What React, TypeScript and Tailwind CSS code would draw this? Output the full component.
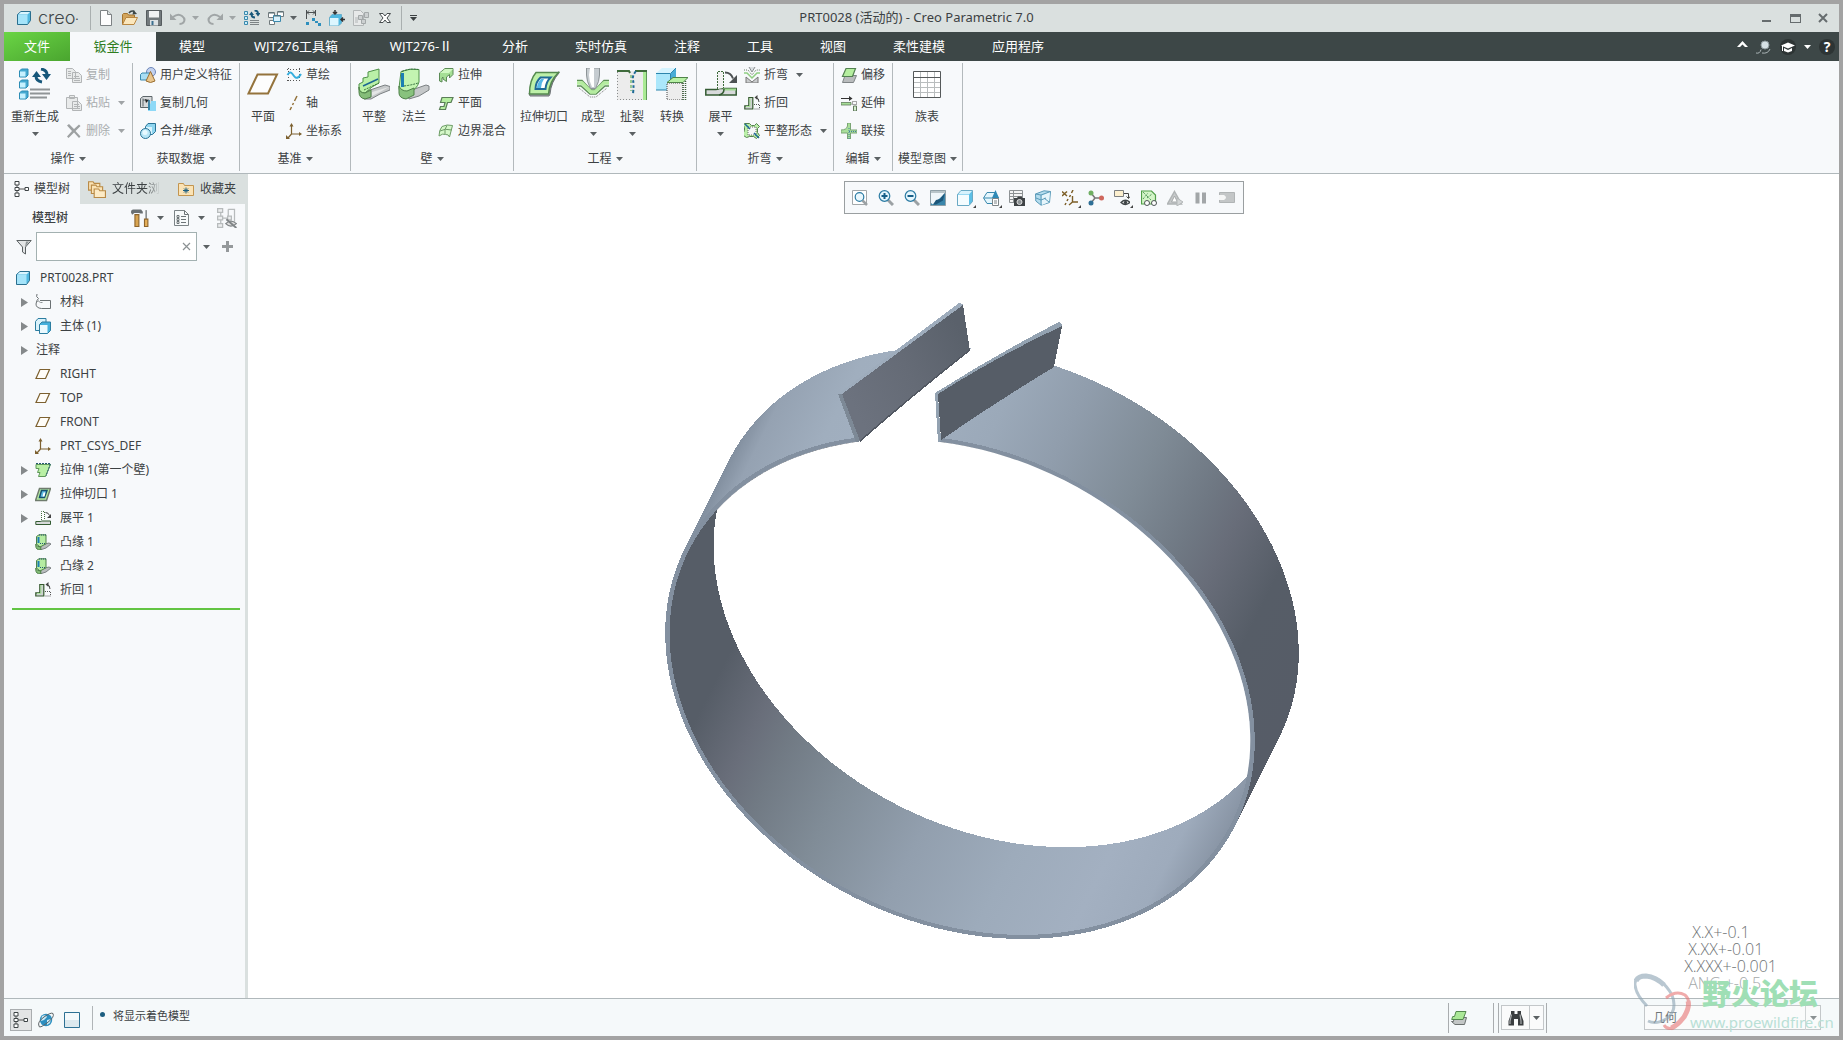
import type { ReactNode } from "react";

const glyphs: Record<string, ReactNode> = {
  cube: (
    <>
      <path d="M1.5 4.5 5 1.5h9.5v9l-3 4h-10z" fill="#4fb8e0" stroke="#2a6f8f" />
      <path d="M2 5h9.5v9H2z" fill="#a5e4fa" />
      <path d="M2 4.5 5 2h9l-2.5 2.5z" fill="#d9f5ff" />
    </>
  ),
  newFile: (
    <>
      <path d="M2.5.5h7l4 4v11h-11z" fill="#fdfdfd" stroke="#7d8284" />
      <path d="M9.5.5v4h4" fill="#d9dede" stroke="#7d8284" />
    </>
  ),
  open: (
    <>
      <path d="M.5 14.5v-10l1-1h4l1 1.5h6v3" fill="#d3a55c" stroke="#a5742e" />
      <path d="M.5 14.5 4 7.5h11.5l-3.5 7z" fill="#fbe7bd" stroke="#b98742" />
      <path d="M7 3q2-3 5.5-1.5" fill="none" stroke="#3d4747" strokeWidth="1.5" />
      <path d="M11.5 0 15 4l-4.500.5z" fill="#3d4747" />
    </>
  ),
  save: (
    <>
      <path d="M.5.5h15v15H.5z" fill="#737a7d" stroke="#565c5f" />
      <path d="M3 1h10v6.5H3z" fill="#f0f2f3" />
      <path d="M4 10h8v5.5H4z" fill="#dce1e4" />
      <path d="M5.5 11h2v4h-2z" fill="#3b6f8f" />
    </>
  ),
  undo: (
    <>
      <path d="M3 7q5-4 9-1t1.5 6.5q-1.5 1.5-4 1.5" fill="none" stroke="#a0a5a6" strokeWidth="2" />
      <path d="M0 3.500V10h6.5z" fill="#a0a5a6" />
    </>
  ),
  redo: (
    <>
      <path d="M13 7Q8 3 4 6t-1.5 6.5Q4 14 6.5 14" fill="none" stroke="#a0a5a6" strokeWidth="2" />
      <path d="M16 3.500V10H9.5z" fill="#a0a5a6" />
    </>
  ),
  regenSmall: (
    <>
      <path d="M.5 1.5h3v3h-3zM.5 6.5h3v3h-3zM.5 11.5h3v3h-3z" fill="#c9eefb" stroke="#3a89ad" />
      <path d="M6 10.5h9M6 12.5h9M6 14.5h9" stroke="#7c8385" />
      <path d="M7.500 4.5q0 3 3.5 3M14 3.5q0-3-3.5-3" fill="none" stroke="#17577a" strokeWidth="1.8" />
      <path d="M5 5l2.500-3.5L10 5zM11.500 3h5L14 6.5z" fill="#17577a" />
    </>
  ),
  windows: (
    <>
      <path d="M.5 2.5h6v5h-6zM9.5 1.5h6v5h-6zM1.5 10.5h5v4h-5z" fill="#fff" stroke="#717a7d" />
      <path d="M5.5 5.5h7v6h-7z" fill="#d8f2fd" stroke="#3a89ad" />
      <path d="M1 3h5M10 2h5M6 6h6" stroke="#4f686f" />
    </>
  ),
  dimension: (
    <>
      <path d="M1.500 0v9M10.500 0v6M2 2.500h8M4 .5l-2 2 2 2M8 .5l2 2-2 2" fill="none" stroke="#4b4f50" />
      <path d="M1 12h3v3H1zM7 8h3v3H7zM10 11h3v2h-3zM13 13h3v3h-3z" fill="#2e8fbd" />
    </>
  ),
  moveBox: (
    <>
      <path d="M.5 7.500 3 4.5h9.500v8.500l-2.500 2.500H.5z" fill="#4fb8e0" stroke="#67aecb" />
      <path d="M1 8h8.500v7.500H1z" fill="#dcf6ff" />
      <path d="M6 0v4M4 2l2 2 2-2M16 9.500h-4M14 7.500l-2 2 2 2" fill="none" stroke="#333" strokeWidth="1.5" />
    </>
  ),
  modelGray: (
    <>
      <path d="M.5.5h7l3 3v12H.5z" fill="#e7e9e9" stroke="#b2b6b7" />
      <path d="M2 8h3M2 10h3M2 12h3" stroke="#b2b6b7" />
      <path d="M5.5 5.5h4v4h-4zM11.5 2.5h4v5h-4zM8.5 9.5h4v4h-4z" fill="#ccd0d1" stroke="#a3a8a9" />
    </>
  ),
  closeX: (
    <path d="M2.500 3.500h3.500L8 6l2-2.500h3.500L10 8l3.500 4.500H10L8 10l-2 2.500H2.500L6 8z" fill="#fff" stroke="#474d4f" />
  ),
  regen: (
    <>
      {[1, 12, 23].map((y) => (
        <g key={y}>
          <path d={`M.5 ${y + 2} 2.5 ${y}h6.5v6l-2 2H.5z`} fill="#45a9d1" stroke="#2c8db5" />
          <path d={`M1 ${y + 2.5}h5.5v5H1z`} fill="#c6f1ff" />
        </g>
      ))}
      <path d="M11 21.5h20M11 25.500h20M11 29.500h17" stroke="#8f9496" strokeWidth="1.800" />
      <path d="M17 8q0 5 6 6M28 7q0-5-6-6" fill="none" stroke="#17577a" strokeWidth="3" />
      <path d="M13 9l4.500-6L22 9zM23 6h9l-4.500 6z" fill="#17577a" />
    </>
  ),
  copy: <path d="M.5 1.5h6l3 3v7h-9zM6.5 5.5h6l3 3v7h-9zM8 9.5h5M8 11.5h6M8 13.5h6M2 4.5h3M2 6.5h3M2 8.5h3" fill="#e9ebeb" stroke="#b2b5b6" />,
  paste: <path d="M.5 2.5h11v11H.5zM3.500.5h5v3h-5zM6.5 6.5h6l3 3v6h-9zM8 9.5h5M8 11.5h6M8 13.5h6" fill="#e9ebeb" stroke="#b2b5b6" />,
  remove: <path d="M1 2.5 3 1l5 5 5-4.5L14.5 3l-5 5 5 5.5-1.5 1.5-5-5.5L2.5 15 1 13.5 6 8z" fill="#9da1a2" />,
  userFeature: (
    <>
      <circle cx="11" cy="5" r="4.5" fill="#c3d2ef" stroke="#6d86b8" />
      <path d="M.5 7.5 2 6h8v5l-2 2H.5z" fill="#a9def4" stroke="#3a89ad" />
      <path d="M10.5 4.5 15 14q-4.5 3-9 0z" fill="#e9c68e" stroke="#9a6f32" />
    </>
  ),
  copyGeom: (
    <>
      <path d="M.5 3.5 3 1.5h9v8l-3 3H.5z" fill="#d7dadc" stroke="#5d666a" />
      <path d="M3 3.5v8M3 5h6" stroke="#5d666a" />
      <path d="M5 4l3.5 1.5L6 8z" fill="#222" />
      <path d="M8 8.5h3V6h5v10H8z" fill="#8ed9f7" />
      <path d="M9 5v10" stroke="#1d6b92" strokeWidth="1.5" />
    </>
  ),
  merge: (
    <>
      <path d="M5.5 3.5 8 .5h7.5v8l-3 3h-7z" fill="#8fd5ef" stroke="#2a7396" />
      <path d="M6 4h6v7H6z" fill="#d8f3fd" />
      <circle cx="5.5" cy="10.5" r="5" fill="#b8e6f7" stroke="#2a7396" />
      <circle cx="5" cy="9.5" r="2.5" fill="#e7f9ff" />
    </>
  ),
  plane32: <path d="M10.500 6.500h19.500l-9 19H1.500z" fill="#fdfdfd" stroke="#94733c" strokeWidth="2" />,
  sketch: (
    <>
      <path d="M1 2.5h14M1 13.5h14M2.5 1v14M13.5 1v14" stroke="#555" strokeDasharray="1 2" />
      <path d="M1.5 8Q4 3.5 6.5 7t3 3.500Q12 12 15 7" fill="none" stroke="#36aede" strokeWidth="2" />
    </>
  ),
  axis: <path d="M11 1 8.5 6M7.5 8l-1 2M5.5 12 4 15" stroke="#94733c" strokeWidth="1.5" />,
  csys: (
    <>
      <path d="M5.5 2v9h9M5.5 11 2 15" fill="none" stroke="#7d6130" strokeWidth="1.2" />
      <path d="M3.500 3.5 5.500 0l2 3.500zM13 9l3 2-3 2zM0 12v4h4z" fill="#7d6130" />
    </>
  ),
  flat32: (
    <>
      <path d="M6 24 27 17l5 1.500v3.500L22 26l-9 5H6z" fill="#c5c8c9" stroke="#7c8183" />
      <path d="M14 24 31 19l-9 5-8 4z" fill="#e4e6e6" />
      <path d="M5 14V10l5-1V4l11-3v14l-7 4-7 6q-6 0-6-5v-4z" fill="#baf0a7" stroke="#4e9149" />
      <path d="M1 19q0 6 6 6l6-3v7l-6 2q-6-1-6-7z" fill="#85bd79" stroke="#4e8148" />
      <path d="M5 18 20 11" stroke="#1c6693" strokeWidth="1.5" />
      <path d="M6 22 21 15" stroke="#3d7a3b" strokeDasharray="2 1" />
    </>
  ),
  flange32: (
    <>
      <path d="M8 24 28 17l3 1v4L21 28 11 31z" fill="#c5c8c9" stroke="#7c8183" />
      <path d="M3 3.5Q12 0 21 1.500V14Q19 22 9 25q-8 1-8-5z" fill="#c3f4b1" stroke="#4e9149" />
      <path d="M1 18q2 5 8 5l7-3v7l-8 4q-7-1-7-6z" fill="#88c27d" stroke="#4e8148" />
      <path d="M4.5 5v14" stroke="#1c7fb3" strokeWidth="3" />
      <path d="M4 3.5Q12 0 20 1.500M6 18q8-1 14-3" fill="none" stroke="#2f6b3c" strokeDasharray="2 1" />
    </>
  ),
  extrude: (
    <>
      <path d="M1.5 6 7 1.5h8v6L11.5 11V7.500l-3 2.500v4.500L5 12v-2l-1 1v4l-2.500-1z" fill="#a5df95" stroke="#5c8b56" />
      <path d="M2 6 7 2h8l-4 4z" fill="#d0f8c2" />
    </>
  ),
  planar: <path d="M4 2.5h11l-2 5H9.5l-2 7H1.5l1-3H6l1-4H2.5z" fill="#b5ee9f" stroke="#5b7f58" strokeWidth="1.2" />,
  blend: (
    <>
      <path d="M4 3.5Q9 1 14.5 2.5L11.5 14q-1-3-4-2.500Q5 10 1 13q0-6 3-9.500z" fill="#d5f7c8" stroke="#6e9d67" />
      <path d="M9 2.5Q6 6 7 11M2 8q5-3 11.5-1" fill="none" stroke="#6e9d67" />
    </>
  ),
  cut32: (
    <>
      <path d="M2 28h19l1-2Q23 14 31 5v-1H30Q22 16 21 25H1z" fill="#999ea0" stroke="#6e7476" />
      <path d="M8 4.5h22.500Q21.500 13 20.500 26H1.500Q1.500 12 8 4.500z" fill="#bdf0a8" stroke="#54894f" strokeWidth="1.5" />
      <path d="M12.5 9.5h10Q18 14 17.500 21h-10q0-7 5-11.500z" fill="#fff" stroke="#1f6b96" strokeWidth="2" />
      <path d="M13 11h3q-3 4-3 9H9q0-5 4-9z" fill="#55b8e6" />
    </>
  ),
  form32: (
    <>
      <path d="M0 12.5h5l9 9.500h4l9-9.500h5M0 18h4l9 8h6l9-8h4" fill="none" stroke="#5c8f55" strokeWidth="1.5" />
      <path d="M0 15h5l9 9h4l9-9h5" fill="none" stroke="#b4ec9f" strokeWidth="3.5" />
      <path d="M2 20l11 9h6l11-9" fill="none" stroke="#777" strokeDasharray="1 1" />
      <path d="M9.5 0h13v7q0 6-4 13.500h-5Q9.500 13 9.500 7z" fill="#c6ccd0" stroke="#8d9497" />
      <path d="M13 0h4v19h-2q-3-6-3-12z" fill="#fff" />
    </>
  ),
  rip32: (
    <>
      <path d="M1 3h29v29H1z" fill="#ececec" />
      <path d="M1.500 4v27.500H29" fill="none" stroke="#8a8d8e" strokeDasharray="1 2" />
      <path d="M1 3h12l1 2M19 3h12" fill="none" stroke="#3f6b3c" strokeWidth="2" />
      <path d="M28.500 4v28" stroke="#a9ea94" strokeWidth="3" />
      <path d="M30.500 4v28" stroke="#5f9859" />
      <path d="M15 7v16" stroke="#9ac793" strokeWidth="2" strokeDasharray="3 2" />
      <path d="M20 3q-4 5-3 9t0 14" fill="none" stroke="#1f6b96" strokeWidth="2" strokeDasharray="3 2" />
    </>
  ),
  convert32: (
    <>
      <path d="M0 5h15v17H0z" fill="#abe7fb" />
      <path d="M0 5 6 0h14l-5 5z" fill="#d5f4ff" />
      <path d="M15 5l5-5v9l-5 6z" fill="#48acd6" />
      <path d="M0 5.5h14.500V22H0M15 5l5-5" fill="none" stroke="#2c85ad" />
      <path d="M11 15h16v17H11z" fill="#ededed" stroke="#444" strokeDasharray="1 1" />
      <path d="M11 14.5 17 9.5h15l-5 5z" fill="#b7f0a4" stroke="#4f8449" />
      <path d="M27 15v17M29.5 13v19" stroke="#3e5f3d" strokeWidth="1.5" strokeDasharray="1 1" />
    </>
  ),
  unbend32: (
    <>
      <path d="M.8 21.500h10.200q3 0 3.500-1h16.700v6.500H.8z" fill="#d8dadb" stroke="#345c33" strokeWidth="1.5" />
      <path d="M18 21.500h13" stroke="#9ed990" strokeWidth="2" />
      <path d="M14 27q5-1 5-6" fill="none" stroke="#345c33" strokeWidth="1.5" />
      <path d="M12.500 21V3.500h6V20" fill="#f2f2f2" stroke="#3f6b3c" strokeDasharray="2 1" />
      <path d="M20 4.500q6 0 8 6" fill="none" stroke="#4c5153" strokeWidth="2" />
      <path d="M32 7v8h-8z" fill="#4c5153" />
    </>
  ),
  bend: (
    <>
      <path d="M0 3h4l4 5 4-5h4" fill="none" stroke="#6b7b69" strokeDasharray="1 1" />
      <path d="M0 6h3l5 5 5-5h3" fill="none" stroke="#8fce82" strokeWidth="1.5" />
      <path d="M2 16v-6l6 5 6-5v6z" fill="#c9cccd" stroke="#777" />
      <path d="M5 0l3 5 3-5" fill="#dbe0e2" stroke="#8a8f91" />
    </>
  ),
  bendBack: (
    <>
      <path d="M.8 10.800h4V2.500h4V14H.8z" fill="#cfd2d3" stroke="#35592f" strokeWidth="1.200" />
      <path d="M2 11.500h4V3" fill="none" stroke="#a9e49a" />
      <path d="M10 9.500h5.500v4.500H10" fill="none" stroke="#555" strokeDasharray="1 1" />
      <path d="M15 7q0-4-3-4.500" fill="none" stroke="#444" />
      <path d="M10.500 2.500 13.500 0v5z" fill="#444" />
    </>
  ),
  flatState: (
    <>
      <path d="M.5.500h5l2 2h3l2-2 3 3-2 2v4l2 3-3 3-3-2h-4l-3 1-3-2v-3l1-2v-3l-1-2z" fill="#baf0a8" stroke="#55814f" />
      <path d="M4 4h8v8H4z" fill="#f6f8f8" stroke="#666" strokeDasharray="1 1" />
      <path d="M1 1l5 5M15 15l-5-5" stroke="#1f6b96" strokeWidth="1.5" />
    </>
  ),
  offset: (
    <>
      <path d="M4 8.5h11.500l-3 7H1.500z" fill="#b9bcbd" stroke="#7f8486" />
      <path d="M5 1.5h9.500l-3 8H1.500z" fill="#b5ee9f" stroke="#528050" strokeWidth="1.2" />
    </>
  ),
  extend: (
    <>
      <path d="M0 3.5h9" stroke="#333" />
      <path d="M8 1l3.500 2.500L8 6z" fill="#333" />
      <path d="M0 7.500h10v2.500H0z" fill="#a5dd96" stroke="#607b5c" strokeWidth="0.800" />
      <path d="M11.500 6.500h4v3h-4z" fill="none" stroke="#555" strokeDasharray="1 1" />
      <path d="M12.500 11v5h3v-5z" fill="#d5eccf" stroke="#607b5c" />
    </>
  ),
  join: (
    <>
      <path d="M6.5 0h3v7h6.500v3H9.500v6h-3v-6H0V7q5.500 0 6.500-4z" fill="#a9df9a" stroke="#7aa574" />
      <path d="M8 5v11M8 8.5h8" stroke="#3f7f9d" strokeDasharray="1 1" />
    </>
  ),
  table32: (
    <>
      <path d="M2.500 3.500h27v26h-27z" fill="#fff" stroke="#55595a" />
      <path d="M9.500 4v25M16.500 4v25M23.500 4v25M3 14.500h26M3 19.500h26M3 24.500h26" stroke="#b9bdbe" />
      <path d="M3 9.500h26" stroke="#55595a" />
    </>
  ),
  treeIcon: (
    <>
      <path d="M3 3.500v9M4 8h7" stroke="#555" />
      <path d="M1 .5h4v3.500H1zM1 6.500h4v3H1zM1 12h4v3.500H1zM11 6.500h3.500v3H11z" fill="#fff" stroke="#3f4547" />
    </>
  ),
  folders: (
    <>
      <path d="M.5 1.500h4l1 1.500h5v6H.5z" fill="#fbe3b5" stroke="#b98a46" />
      <path d="M3 4.500h4l1 1.500h5v6H3z" fill="#fbe3b5" stroke="#b98a46" />
      <path d="M5.500 8h4l1 1.500h5v6h-10z" fill="#fdebc6" stroke="#b98a46" />
    </>
  ),
  favorite: (
    <>
      <path d="M.5 14.500v-12h5l1 2h9v10z" fill="#fbe3b5" stroke="#c3954f" />
      <path d="M8 6.500v6M5 9.500h6M6 7.500l4 4M10 7.500l-4 4" stroke="#1c5e80" />
    </>
  ),
  hammer: (
    <>
      <path d="M0 3q0-2.500 2-2.500h7l1.500 2v1.500h-2L7 3.500H3L1 5z" fill="#6a7073" />
      <path d="M3.500 5h3.500v10.500H3.500z" fill="#d9a551" stroke="#8e652c" />
      <path d="M13.500 1v8" stroke="#8b9092" strokeWidth="1.500" />
      <path d="M12 9h3v6.500h-3z" fill="#e6b05a" stroke="#8e652c" />
    </>
  ),
  listPage: (
    <>
      <path d="M.5.500h10l4 4v11H.5z" fill="#f7fafb" stroke="#7b8386" />
      <path d="M10.500.5v4h4M7 6.500h5M7 9.500h5M7 12.500h5" fill="none" stroke="#6c7477" />
      <path d="M3 5.500h2v2H3zM3 8.500h2v2H3zM3 11.500h2v2H3z" fill="#fff" stroke="#6c7477" />
    </>
  ),
  treeHidden: (
    <>
      <path d="M3 3v10M3 8h6M9 1h5v10M9 1v7" fill="none" stroke="#b7bbbc" />
      <path d="M.5.500h4v3h-4zM.5 6.500h4v3h-4zM.5 12.500h4v3h-4zM8.500 6.500h3v3h-3z" fill="#eceeef" stroke="#b7bbbc" />
      <path d="M7 12.500q4-4 8.500 0-4.500 4-8.500 0z" fill="#ddd" stroke="#7f8486" />
      <path d="M7.500 9l8 7" stroke="#7f8486" strokeWidth="1.5" />
    </>
  ),
  funnel: (
    <>
      <path d="M.8 1.500h14.400L9.500 8v7l-3-2V8z" fill="#e3e5e6" stroke="#5b6163" />
      <path d="M9 8l4-5.500h-3z" fill="#8f9597" />
    </>
  ),
  material: (
    <>
      <path d="M5 6.500h10.500v8h-9Q1 14 1 10q.5-4 2.500-5.500Q.5 3 2 0" fill="none" stroke="#6b7173" />
      <path d="M2 8q1-2.500 2-.5l1.500 1h2" fill="none" stroke="#8e9496" />
    </>
  ),
  bodies: (
    <>
      <path d="M.5 3.5 3 .5h8v9l-3 3H.5z" fill="#d9f2fb" stroke="#2c7da0" />
      <path d="M4.5 6.5 7 4h8.500v8.500l-3 3h-8z" fill="#45b0dc" stroke="#2c7da0" />
      <path d="M5 7h7.500v8H5z" fill="#ebf9fe" />
    </>
  ),
  planeSmall: <path d="M5 3.500h9.500l-4 9H1z" fill="#fffdf8" stroke="#7d6130" strokeWidth="1.200" />,
  firstWall: (
    <>
      <path d="M1 2.500h14.500l-5 12H3.500l1.500-4H2.500l1.500-4H1z" fill="#b9f0a5" stroke="#5f9859" />
      <path d="M1 1.500h14.500L11 14" fill="none" stroke="#255a70" strokeDasharray="2 1" />
    </>
  ),
  cut: (
    <>
      <path d="M4.500 2.500h11l-4 12H.5z" fill="#b4eaa0" stroke="#6f7c6d" strokeWidth="1.5" />
      <path d="M6.500 4.500h5.500l-2.500 7h-5z" fill="#5bbbe4" stroke="#174f70" strokeWidth="1.5" />
      <path d="M8.500 6.500h2l-1 4h-2z" fill="#fff" />
    </>
  ),
  unbend: (
    <>
      <path d="M.8 11.500h5l1-.5h8.700v3.500H.8z" fill="#d8dadb" stroke="#345c33" />
      <path d="M6.500 10V1.500h3v8" fill="#fff" stroke="#3f6b3c" strokeDasharray="1 1" />
      <path d="M10.500 2.500q3 0 4 3" fill="none" stroke="#444" />
      <path d="M16 4v4h-4z" fill="#444" />
    </>
  ),
  flange: (
    <>
      <path d="M6 11l8-2 2 1-5 4-6 2z" fill="#b9bdbe" stroke="#7c8183" />
      <path d="M1.500 2.500 4 .8h7v9L5 13l-3.500-3z" fill="#b5eca2" stroke="#4e8148" />
      <path d="M.8 10q1 3 5 3v3q-5 0-5-4z" fill="#84bd79" stroke="#4e8148" />
      <path d="M3.500 3v6" stroke="#1c7fb3" strokeWidth="2" />
      <path d="M4 1h7M5 9.500h6" stroke="#255a70" strokeDasharray="1 1" />
    </>
  ),
  refit: (
    <>
      <path d="M.5.500h14v14H.5z" fill="#fff" stroke="#a3a8aa" />
      <circle cx="7.500" cy="7" r="4.300" fill="#e9f7fd" stroke="#2b7ba3" strokeWidth="1.200" />
      <path d="M10.500 10.500 15 15" stroke="#9ba1a4" strokeWidth="2.5" />
    </>
  ),
  zoomIn: (
    <>
      <path d="M9.500 9.500 15 15" stroke="#9ba1a4" strokeWidth="3" />
      <circle cx="6.500" cy="6" r="5.300" fill="#e5f6fd" stroke="#2b7ba3" strokeWidth="1.200" />
      <path d="M3.500 6h6M6.500 3v6" stroke="#165f88" strokeWidth="2" />
    </>
  ),
  zoomOut: (
    <>
      <path d="M9.500 9.500 15 15" stroke="#9ba1a4" strokeWidth="3" />
      <circle cx="6.500" cy="6" r="5.300" fill="#e5f6fd" stroke="#2b7ba3" strokeWidth="1.200" />
      <path d="M3.500 6h6" stroke="#165f88" strokeWidth="2" />
    </>
  ),
  repaint: (
    <>
      <path d="M.5.500h15v15H.5z" fill="#3a86ab" stroke="#8fa0a8" />
      <path d="M1 3h14.500L10 8 3 14.500 1 13z" fill="#eef6fa" />
      <path d="M3 14.500l3-4.500 4-1 5-6.500-2 8-7 4z" fill="#1b567a" />
      <path d="M1 2h14" stroke="#b8c5ca" strokeWidth="2" />
    </>
  ),
  shaded: (
    <>
      <path d="M.5 4.500 4 .5h11.500v11l-3.500 4H.5z" fill="#5cbfe6" stroke="#6aa9c4" />
      <path d="M1 5h11v10H1z" fill="#f4fcff" />
      <path d="M1 4.500 4 1h11l-3 3.500z" fill="#d6f2fd" />
    </>
  ),
  savedView: (
    <>
      <path d="M.5 8 4 2.500h8L15.500 8 12 13.500H4z" fill="#e4f6fd" stroke="#3a89ad" />
      <path d="M1 8h14" stroke="#3a89ad" />
      <path d="M12.500 0 16 8H9z" fill="#2f8ab6" />
      <path d="M9.500 8.500h6v7h-6zM11 11h3M11 13h3" fill="#fff" stroke="#7d8486" />
    </>
  ),
  viewManager: (
    <>
      <path d="M.5.500h13v12H.5zM1 3.500h12M1 6.500h12M1 9.500h12M4.500 1v11" fill="#f4f5f5" stroke="#8d9294" />
      <path d="M5 8h3l1-1.500h3.500l1 1.500H16v8H5z" fill="#3e4345" />
      <circle cx="10.500" cy="12" r="2.500" fill="#8c9294" stroke="#ddd" />
    </>
  ),
  perspective: (
    <>
      <path d="M.5 4 9 .8l6.500.7-1 11L6 15.200.8 11z" fill="#b5ddee" stroke="#5a9ab8" />
      <path d="M7 5.500 15 2l-1 10-7 3z" fill="#e6f5fb" />
      <path d="M.5 4l5.500 1L15.500 1.500M6 5v10M1 8l5 2M6 10l5-2M9 8l5 4" fill="none" stroke="#5a9ab8" />
    </>
  ),
  datums: (
    <>
      <path d="M0 1.500 5 6M5 1.500 0 6M11 0 9.500 3M8.500 5l-1 2M6 9l-1 2M4 13l-1 2" stroke="#7d5f28" strokeWidth="1.500" />
      <path d="M10.500 6v6H16M10.500 12 7 15" fill="none" stroke="#7d5f28" strokeWidth="1.400" />
    </>
  ),
  spin: (
    <>
      <path d="M3 3l4 5h7M7 8l-4 5" fill="none" stroke="#777" strokeWidth="1.500" />
      <circle cx="3" cy="3" r="2.500" fill="#6fae62" />
      <circle cx="13.500" cy="8" r="2.500" fill="#cf675d" />
      <circle cx="3" cy="13" r="2.500" fill="#2e6f96" />
    </>
  ),
  annotations: (
    <>
      <path d="M.5.500h9v6h-9z" fill="#fdf0cf" stroke="#7c7f80" />
      <path d="M10 3.500h4.500V8M12.500 6.500l2 2 1.500-2" fill="none" stroke="#444" />
      <path d="M7 12.500q4.500-4.500 9 0-4.500 4-9 0z" fill="#fff" stroke="#3f4547" strokeWidth="1.300" />
      <circle cx="11.500" cy="12.500" r="1.700" fill="#3f4547" />
    </>
  ),
  simulate: (
    <>
      <path d="M.5 1h10l4 4v9H.5z" fill="#d4f5c8" stroke="#519f49" strokeWidth="1.200" />
      <path d="M2 2l8 8M2 9l5-6M6 8l5-4" stroke="#2f7f3b" strokeDasharray="1 1" />
      <circle cx="6" cy="13" r="2.500" fill="#fff" stroke="#4f5557" />
      <circle cx="13" cy="13" r="2.500" fill="#fff" stroke="#4f5557" />
    </>
  ),
  warning: (
    <>
      <path d="M7.500 1.500 14.500 14H.5z" fill="#c6c9ca" stroke="#b0b4b5" strokeWidth="1.500" />
      <path d="M7.500 6 10.500 12h-6z" fill="#fff" stroke="#a4a8a9" />
      <path d="M10 8l6 4-6 4z" fill="#d3d6d7" stroke="#b3b7b8" />
    </>
  ),
  pause: <path d="M2.500 2.500h4v11h-4zM9 2.500h4v11H9z" fill="#a2a6a8" />,
  resultGray: (
    <>
      <path d="M.5 2.500h15v10H.5z" fill="#c3c6c7" stroke="#b0b4b5" />
      <path d="M0 5h5q4 2.500 0 5H0z" fill="#f5f6f6" />
    </>
  ),
  globe: (
    <>
      <circle cx="8" cy="8" r="6.200" fill="#2c8fc0" />
      <path d="M4 4q4-2 5 1l-3 3-3 1zM9 8l4-1-1 4-3 2z" fill="#c7eaf7" />
      <path d="M1 14Q-1 10 6 5T15 1.500Q17 5 9 11T1 14z" fill="none" stroke="#5e6568" />
    </>
  ),
  screen: (
    <>
      <path d="M.5.500h15v15H.5z" fill="#dce9ee" stroke="#2d7194" />
      <path d="M1 1h14v7H1z" fill="#f4f9fb" />
    </>
  ),
  sheet: (
    <>
      <path d="M3 7.500h12.500l-2 7H4l-3.500-3h2z" fill="#c3c7c6" stroke="#6b716f" />
      <path d="M5 1.500h10l-3 8H.7l1-3H3.500z" fill="#abe897" stroke="#54884e" />
    </>
  ),
  binoculars: (
    <>
      <path d="M3 1h3.500v3H9.500V1H13v3l2.500 7v4.500H10V9H6v6.500H.5V11L3 4z" fill="#3a3e40" />
      <path d="M3.500 4.500 2 11v3M12 4.500l1 6.500v3" fill="none" stroke="#a9adaf" strokeWidth="1.200" />
    </>
  ),
};

function Glyph({ name, big }: { name: string; big?: boolean }) {
  return (
    <svg
      viewBox={big ? "0 0 32 32" : "0 0 16 16"}
      className={big ? "h-8 w-8 shrink-0" : "h-4 w-4 shrink-0"}
      aria-hidden="true"
    >
      {glyphs[name]}
    </svg>
  );
}

function Caret({ className = "text-[#5b6163]" }: { className?: string }) {
  return (
    <svg viewBox="0 0 7 4" className={`h-1 w-[7px] shrink-0 ${className}`} aria-hidden="true">
      <path d="M0 0h7L3.5 4z" fill="currentColor" />
    </svg>
  );
}

function Small({ icon, label, menu, disabled }: { icon: string; label: string; menu?: boolean; disabled?: boolean }) {
  return (
    <button type="button" disabled={disabled} className="flex h-7 items-center gap-1 whitespace-nowrap disabled:text-[#a9adaf]">
      <Glyph name={icon} />
      {label}
      {menu && <Caret className={disabled ? "ml-1 text-[#a0a4a6]" : "ml-1 text-[#5b6163]"} />}
    </button>
  );
}

function Big({ icon, label, menu, width = "w-10" }: { icon: string; label: string; menu?: boolean; width?: string }) {
  return (
    <button type="button" className={`flex shrink-0 flex-col items-center pt-[7px] ${width}`}>
      <Glyph name={icon} big />
      <span className="mt-2 h-[18px] leading-[18px] whitespace-nowrap">{label}</span>
      {menu && <Caret className="mt-1.5 text-[#5b6163]" />}
    </button>
  );
}

function Group({ title, width, children }: { title: string; width: string; children: ReactNode }) {
  return (
    <section className={`flex shrink-0 ${width}`}>
      <div className="flex min-w-0 flex-1 flex-col">
        <div className="flex h-[84px]">{children}</div>
        <button type="button" className="flex h-7 items-center justify-center gap-1 whitespace-nowrap">
          {title}
          <Caret />
        </button>
      </div>
      <div className="my-0.5 w-px bg-[#b3b9bc]" />
    </section>
  );
}

function QuickButton({ icon, label, menu }: { icon: string; label: string; menu?: string }) {
  return (
    <button type="button" aria-label={label} className="flex items-center gap-1.5">
      <Glyph name={icon} />
      {menu && <Caret className={menu} />}
    </button>
  );
}

function TitleBar() {
  return (
    <header className="flex h-7 shrink-0 items-center bg-[#dae0df] text-[13px] text-[#3c4143]">
      <div className="flex flex-1 items-center">
        <div className="ml-3 flex w-[74px] items-center gap-1.5">
          <Glyph name="cube" />
          <span className="font-[Inter,sans-serif] text-lg leading-6 font-light text-[#40474a]">
            creo<sup className="text-[6px]">•</sup>
          </span>
        </div>
        <div className="flex h-6 items-center gap-2 border-x border-[#a9afaf] pr-2 pl-[7px]">
          <QuickButton icon="newFile" label="新建" />
          <QuickButton icon="open" label="打开" />
          <QuickButton icon="save" label="保存" />
          <QuickButton icon="undo" label="撤消" menu="text-[#a0a5a6]" />
          <QuickButton icon="redo" label="重做" menu="text-[#a0a5a6]" />
          <QuickButton icon="regenSmall" label="重新生成" />
          <QuickButton icon="windows" label="窗口" menu="text-[#5b6163]" />
          <QuickButton icon="dimension" label="尺寸" />
          <QuickButton icon="moveBox" label="移动" />
          <QuickButton icon="modelGray" label="模型" />
          <QuickButton icon="closeX" label="关闭窗口" />
        </div>
        <button type="button" aria-label="自定义快速访问工具栏" className="ml-2 flex flex-col items-center gap-px">
          <span className="h-px w-[7px] bg-[#3c4143]" />
          <Caret className="text-[#3c4143]" />
        </button>
      </div>
      <h1>PRT0028 (活动的) - Creo Parametric 7.0</h1>
      <div className="flex flex-1 items-center justify-end gap-4 pr-2.5">
        <button type="button" aria-label="最小化" className="flex h-3 w-3 items-end pb-0.5">
          <span className="h-0.5 w-[9px] bg-[#666c6e]" />
        </button>
        <button type="button" aria-label="最大化" className="h-[9px] w-[11px] border border-t-[3px] border-[#666c6e]" />
        <button type="button" aria-label="关闭" className="h-3 w-3">
          <svg viewBox="0 0 12 12"><path d="M2 2l8 8M10 2l-8 8" stroke="#666c6e" strokeWidth="2" /></svg>
        </button>
      </div>
    </header>
  );
}

const tabs = [
  { label: "模型" },
  { label: "WJT276工具箱", width: "w-[88px]" },
  { label: "WJT276-Ⅱ", width: "w-[68px]" },
  { label: "分析" },
  { label: "实时仿真" },
  { label: "注释" },
  { label: "工具" },
  { label: "视图" },
  { label: "柔性建模" },
  { label: "应用程序" },
];

function TabBar() {
  return (
    <nav className="flex h-[29px] shrink-0 items-stretch bg-[#3d4747] text-[13px] text-white">
      <button type="button" className="w-[66px] bg-linear-to-br from-[#6ad545] to-[#4aa52f]">文件</button>
      <button type="button" className="w-[86px] bg-[#f7f9fb] text-[#2f7d1f]">钣金件</button>
      <div className="flex flex-1 gap-[47px] pl-[23px]">
        {tabs.map((tab) => (
          <button type="button" key={tab.label} className={`whitespace-nowrap ${tab.width ?? ""}`}>{tab.label}</button>
        ))}
      </div>
      <div className="flex items-center gap-2 pr-1">
        <button type="button" aria-label="最小化功能区" className="pb-1.5">
          <svg viewBox="0 0 11 6" className="h-1.5 w-[11px]"><path d="M0 6 5.5 0 11 6H8L5.500 3.500 3 6z" fill="#fff" /></svg>
        </button>
        <button type="button" aria-label="搜索">
          <svg viewBox="0 0 16 16" className="h-4 w-4">
            <circle cx="9" cy="6" r="4" fill="#d5e0e4" stroke="#8d999c" />
            <path d="M0 14q4 1 5-3.500M6 14q6 1 8-4" fill="none" stroke="#aab4b6" />
          </svg>
        </button>
        <button type="button" aria-label="学习" className="flex items-center gap-2">
          <svg viewBox="0 0 16 16" className="h-4 w-4">
            <circle cx="8" cy="8" r="8" fill="#2d3434" />
            <path d="M1 6.500 8 3.500l7 3L8 9.500zM4 9l4 2 4-2v3l-4 1.500L4 12zM2 7h1v5H2z" fill="#fff" />
          </svg>
          <Caret className="text-white" />
        </button>
        <button type="button" aria-label="帮助" className="h-4 w-4 rounded-full bg-[#2d3434] text-sm leading-4 font-bold">?</button>
      </div>
    </nav>
  );
}

function Ribbon() {
  return (
    <div className="flex h-[113px] shrink-0 overflow-hidden border-b border-[#b0b8bb] bg-[#f7f9fb]">
      <Group title="操作" width="w-[129px]">
        <Big icon="regen" label="重新生成" menu width="w-[62px]" />
        <div>
          <Small icon="copy" label="复制" disabled />
          <Small icon="paste" label="粘贴" menu disabled />
          <Small icon="remove" label="删除" menu disabled />
        </div>
      </Group>
      <Group title="获取数据" width="w-[107px]">
        <div className="pl-[7px]">
          <Small icon="userFeature" label="用户定义特征" />
          <Small icon="copyGeom" label="复制几何" />
          <Small icon="merge" label="合并/继承" />
        </div>
      </Group>
      <Group title="基准" width="w-[111px]">
        <Big icon="plane32" label="平面" width="w-[46px]" />
        <div>
          <Small icon="sketch" label="草绘" />
          <Small icon="axis" label="轴" />
          <Small icon="csys" label="坐标系" />
        </div>
      </Group>
      <Group title="壁" width="w-[163px]">
        <Big icon="flat32" label="平整" width="w-[46px]" />
        <Big icon="flange32" label="法兰" width="w-[34px]" />
        <div className="pl-[7px]">
          <Small icon="extrude" label="拉伸" />
          <Small icon="planar" label="平面" />
          <Small icon="blend" label="边界混合" />
        </div>
      </Group>
      <Group title="工程" width="w-[183px]">
        <Big icon="cut32" label="拉伸切口" width="w-[60px]" />
        <Big icon="form32" label="成型" menu width="w-[38px]" />
        <Big icon="rip32" label="扯裂" menu />
        <Big icon="convert32" label="转换" />
      </Group>
      <Group title="折弯" width="w-[137px]">
        <Big icon="unbend32" label="展平" menu width="w-[47px]" />
        <div>
          <Small icon="bend" label="折弯" menu />
          <Small icon="bendBack" label="折回" />
          <Small icon="flatState" label="平整形态" menu />
        </div>
      </Group>
      <Group title="编辑" width="w-[59px]">
        <div className="pl-[7px]">
          <Small icon="offset" label="偏移" />
          <Small icon="extend" label="延伸" />
          <Small icon="join" label="联接" />
        </div>
      </Group>
      <Group title="模型意图" width="w-[70px]">
        <Big icon="table32" label="族表" width="w-[68px]" />
      </Group>
    </div>
  );
}

interface TreeNode {
  label: string;
  icon?: string;
  expandable?: boolean;
}

const treeNodes: TreeNode[] = [
  { label: "材料", icon: "material", expandable: true },
  { label: "主体 (1)", icon: "bodies", expandable: true },
  { label: "注释", expandable: true },
  { label: "RIGHT", icon: "planeSmall" },
  { label: "TOP", icon: "planeSmall" },
  { label: "FRONT", icon: "planeSmall" },
  { label: "PRT_CSYS_DEF", icon: "csys" },
  { label: "拉伸 1(第一个壁)", icon: "firstWall", expandable: true },
  { label: "拉伸切口 1", icon: "cut", expandable: true },
  { label: "展平 1", icon: "unbend", expandable: true },
  { label: "凸缘 1", icon: "flange" },
  { label: "凸缘 2", icon: "flange" },
  { label: "折回 1", icon: "bendBack" },
];

function Sidebar() {
  return (
    <aside className="flex w-[244px] shrink-0 flex-col border-r-[3px] border-[#dae0df] bg-[#f7f9fb]">
      <div className="-mr-[3px] flex h-[30px] bg-[#dae0df]">
        <button type="button" className="flex w-[76px] items-center gap-1 bg-[#f7f9fb] pl-2.5">
          <Glyph name="treeIcon" />
          <span className="whitespace-nowrap">模型树</span>
        </button>
        <button type="button" className="flex w-[84px] items-center gap-1.5 pl-2">
          <svg viewBox="0 0 16 16" className="h-[18px] w-[18px] shrink-0">{glyphs.folders}</svg>
          <span className="mask-r-from-70% whitespace-nowrap">文件夹浏</span>
        </button>
        <button type="button" className="flex flex-1 items-center gap-1.5 pl-3.5">
          <Glyph name="favorite" />
          <span className="whitespace-nowrap">收藏夹</span>
        </button>
      </div>
      <div className="flex h-7 items-center pr-2 pl-7">
        <h2 className="flex-1 font-medium">模型树</h2>
        <button type="button" aria-label="设置" className="flex items-center gap-2">
          <svg viewBox="0 0 16 16" className="h-5 w-[18px]">{glyphs.hammer}</svg>
          <Caret />
        </button>
        <button type="button" aria-label="显示" className="ml-2.5 flex items-center gap-2">
          <svg viewBox="0 0 16 16" className="h-[18px] w-4">{glyphs.listPage}</svg>
          <Caret />
        </button>
        <button type="button" aria-label="隐藏项" className="ml-3">
          <svg viewBox="0 0 16 16" className="h-5 w-5">{glyphs.treeHidden}</svg>
        </button>
      </div>
      <div className="flex items-center pr-3 pl-3">
        <Glyph name="funnel" />
        <div className="relative ml-1 flex-1">
          <input type="text" aria-label="过滤" className="block h-[29px] w-full border border-[#a3b1b1] bg-white px-2 pr-6 outline-none" />
          <button type="button" aria-label="清除" className="absolute top-[10px] right-1.5">
            <svg viewBox="0 0 9 9" className="h-[9px] w-[9px]"><path d="M1 1l7 7M8 1 1 8" stroke="#8b9193" strokeWidth="1.200" /></svg>
          </button>
        </div>
        <button type="button" aria-label="过滤选项" className="ml-1.5"><Caret /></button>
        <button type="button" aria-label="添加" className="ml-3">
          <svg viewBox="0 0 11 11" className="h-[11px] w-[11px]"><path d="M5.500 0v11M0 5.500h11" stroke="#95999b" strokeWidth="3" /></svg>
        </button>
      </div>
      <ul className="mt-[5px]">
        <li className="flex h-6 items-center pl-[11px]">
          <Glyph name="cube" />
          <span className="ml-[9px]">PRT0028.PRT</span>
        </li>
        {treeNodes.map((node) => (
          <li key={node.label} className="flex h-6 items-center pl-[17px]">
            {node.expandable ? (
              <button type="button" aria-label={`展开 ${node.label}`} className="w-[14px]">
                <svg viewBox="0 0 7 9" className="h-[9px] w-[7px]"><path d="M0 0l7 4.500L0 9z" fill="#85898b" /></svg>
              </button>
            ) : (
              <span className="w-[14px]" />
            )}
            {node.icon && <Glyph name={node.icon} />}
            <span className={node.icon ? "ml-[9px] whitespace-nowrap" : "ml-px whitespace-nowrap"}>{node.label}</span>
          </li>
        ))}
      </ul>
      <div className="mt-1.5 mr-[5px] ml-2 h-0.5 bg-[#62c443]" />
    </aside>
  );
}

const viewTools: { icon: string; label: string; more?: boolean }[] = [
  { icon: "refit", label: "重新调整" },
  { icon: "zoomIn", label: "放大" },
  { icon: "zoomOut", label: "缩小" },
  { icon: "repaint", label: "重画" },
  { icon: "shaded", label: "显示样式", more: true },
  { icon: "savedView", label: "已保存方向", more: true },
  { icon: "viewManager", label: "视图管理器" },
  { icon: "perspective", label: "透视图" },
  { icon: "datums", label: "基准显示过滤器", more: true },
  { icon: "spin", label: "旋转中心" },
  { icon: "annotations", label: "注释显示", more: true },
  { icon: "simulate", label: "仿真" },
  { icon: "warning", label: "仿真运行" },
  { icon: "pause", label: "暂停" },
  { icon: "resultGray", label: "结果" },
];

// Sheet metal ring: front ellipse at (960,687), back ellipse shifted by (44,-88)
function RingModel() {
  return (
    <svg viewBox="248 174 1591 824" className="h-full w-full" shapeRendering="crispEdges" role="img" aria-label="PRT0028">
      <defs>
        <linearGradient id="outerSkin" gradientUnits="userSpaceOnUse" x1="685" y1="549" x2="1235" y2="825">
          <stop offset="0" stopColor="#8390a0" />
          <stop offset="0.03" stopColor="#95a2b2" />
          <stop offset="0.12" stopColor="#a0aebe" />
          <stop offset="0.22" stopColor="#a2b0c1" />
          <stop offset="0.36" stopColor="#9ba9b9" />
          <stop offset="0.47" stopColor="#909dac" />
          <stop offset="0.61" stopColor="#7f8b96" />
          <stop offset="0.72" stopColor="#6f7883" />
          <stop offset="0.78" stopColor="#686d79" />
          <stop offset="0.88" stopColor="#565d67" />
          <stop offset="1" stopColor="#565c67" />
        </linearGradient>
        <linearGradient id="innerSkin" gradientUnits="userSpaceOnUse" x1="685" y1="549" x2="1235" y2="825">
          <stop offset="0" stopColor="#565d67" />
          <stop offset="0.14" stopColor="#565d67" />
          <stop offset="0.23" stopColor="#696e7a" />
          <stop offset="0.29" stopColor="#717a84" />
          <stop offset="0.4" stopColor="#808c97" />
          <stop offset="0.55" stopColor="#929fae" />
          <stop offset="0.7" stopColor="#9dabbb" />
          <stop offset="0.84" stopColor="#a3b0c1" />
          <stop offset="0.93" stopColor="#9eabbc" />
          <stop offset="1" stopColor="#8793a3" />
        </linearGradient>
        <linearGradient id="leftTab" gradientUnits="userSpaceOnUse" x1="850" y1="400" x2="966" y2="340">
          <stop offset="0" stopColor="#6c727e" />
          <stop offset="0.5" stopColor="#656b76" />
          <stop offset="1" stopColor="#5a616b" />
        </linearGradient>
        <clipPath id="frontOpening">
          <ellipse cx="960" cy="687" rx="303.5" ry="231.5" transform="rotate(26.8 960 687)" />
        </clipPath>
      </defs>
      <path d="M685 548 729 460 1279 738 1235 826z" fill="url(#outerSkin)" />
      <path d="M729 460a308 235.5 26.8 0 1 550 278a308 235.5 26.8 0 1-550-278z" fill="url(#outerSkin)" />
      <path d="M685 548a308 235.5 26.8 0 1 550 278a308 235.5 26.8 0 1-550-278z" fill="#8390a0" />
      <path d="M689 550a303.5 231.5 26.8 0 1 542 274a303.5 231.5 26.8 0 1-542-274z" fill="url(#innerSkin)" />
      <g clipPath="url(#frontOpening)">
        <ellipse cx="1004" cy="599" rx="303.5" ry="232" transform="rotate(26.8 1004 599)" fill="#fff" />
      </g>
      <path d="M858 456V441L969 350 1000 325 1053 362 938 436 940 443V456z" fill="#fff" />
      <path d="M838 394 959 303 963 304V306L842 395z" fill="#9eacbc" />
      <path d="M838 394h4L861 441 856 442z" fill="#7d8996" />
      <path d="M842 394 963 305 970 351Q915 393 860 441z" fill="url(#leftTab)" />
      <path d="M970 350Q915 393 860 441" fill="none" stroke="#525862" strokeWidth="1.5" />
      <path d="M935 393Q995 355 1059 322l3 2v3L938 395l3 46-3 1z" fill="#93a2b1" />
      <path d="M938 394Q996 357 1062 326L1054 367Q996 402 941 440z" fill="#565d67" />
    </svg>
  );
}

function Viewport() {
  return (
    <main className="relative min-w-0 flex-1 overflow-hidden bg-white">
      <RingModel />
      <div className="absolute top-[7px] left-1/2 flex h-[33px] w-[400px] -translate-x-1/2 items-center justify-between border border-[#9a9fa1] bg-[#f7f9fb] px-[7px]">
        {viewTools.map((tool) => (
          <button type="button" key={tool.icon} aria-label={tool.label} className="relative">
            <Glyph name={tool.icon} />
            {tool.more && (
              <svg viewBox="0 0 3 3" className="absolute -right-[3px] -bottom-0.5 h-[3px] w-[3px]"><path d="M3 0v3H0z" fill="#444" /></svg>
            )}
          </button>
        ))}
      </div>
      <div className="absolute right-[62px] bottom-1.5 font-['Open_Sans',sans-serif] text-base leading-[17px] font-light text-[#707476]">
        <p className="pl-2">X.X+-0.1</p>
        <p className="pl-1">X.XX+-0.01</p>
        <p>X.XXX+-0.001</p>
        <p className="pl-1 text-[#a5a9aa]">ANG.+-0.5</p>
      </div>
    </main>
  );
}

function StatusBar() {
  return (
    <footer className="flex h-[38px] shrink-0 items-center border-t border-[#b0b8bb] bg-[#f5f9fa]">
      <button type="button" aria-label="模型树" className="mt-1 ml-1.5 flex h-[22px] w-[22px] items-center justify-center border border-[#a9adaf] bg-[#e3e4e5]">
        <Glyph name="treeIcon" />
      </button>
      <button type="button" aria-label="浏览器" className="mt-1 ml-1.5"><Glyph name="globe" /></button>
      <button type="button" aria-label="全屏" className="mt-1 ml-2.5"><Glyph name="screen" /></button>
      <div className="ml-3 flex h-6 flex-1 items-start border-l border-[#b0b5b7] pl-[7px]">
        <span className="mt-1.5 mr-2 h-[5px] w-[5px] rounded-full bg-[#1c5e80]" />
        <p className="pt-0.5 text-[11px] leading-4">将显示着色模型</p>
      </div>
      <div className="flex h-[30px] w-[46px] items-center border-x border-[#a9adaf] pl-0.5">
        <button type="button" aria-label="几何状态"><Glyph name="sheet" /></button>
      </div>
      <div className="ml-1 flex h-[30px] items-center border-x border-[#a9adaf] px-0.5">
        <button type="button" aria-label="查找" className="flex h-[25px] w-[43px] items-center border border-[#c3c7c9] bg-[#fafbfb]">
          <span className="flex h-full w-[28px] items-center justify-center border-r border-[#c3c7c9]"><Glyph name="binoculars" /></span>
          <span className="flex flex-1 justify-center"><Caret /></span>
        </button>
      </div>
      <div className="relative mr-[18px] ml-[97px]">
        <select aria-label="选择过滤器" className="block h-[25px] w-[177px] appearance-none border border-[#c3c7c9] bg-[#fafbfb] pl-2 text-[#707678]">
          <option>几何</option>
        </select>
        <span className="pointer-events-none absolute inset-y-0 right-0 flex w-4 items-center justify-center border-l border-[#d0d4d5]">
          <Caret className="text-[#8b9193]" />
        </span>
      </div>
    </footer>
  );
}

function Watermark() {
  return (
    <div className="pointer-events-none absolute right-0 bottom-0 flex h-16 w-[205px] items-end">
      <svg viewBox="0 0 60 62" className="h-16 w-[60px] shrink-0" fill="none" opacity="0.6">
        <path d="M14 48Q22 52 32 46 44 38 38 22 28 4 12 3 0 4 1 12q1 10 12 21" stroke="#8ca3b3" strokeWidth="3" />
        <path d="M2 8Q4 3 12 3 22 4 30 12" stroke="#8ca3b3" strokeWidth="5" />
        <path d="M32 25q10-8 19-3 6 5 2 16-5 12-14 17-6 2-9-3" stroke="#e77474" strokeWidth="3" />
        <path d="M54 28q2 6-4 16-7 9-13 11" stroke="#e77474" strokeWidth="5" />
      </svg>
      <div className="-ml-1 whitespace-nowrap">
        <p className="pl-3 text-[29px] leading-9 font-black text-[#9fdfb5]">野火论坛</p>
        <p className="pb-1 text-[15px] leading-5 text-[#b9e0d6]">www.proewildfire.cn</p>
      </div>
    </div>
  );
}

export default function App() {
  return (
    <div className="relative flex h-screen flex-col overflow-hidden border-4 border-[#a3a3a3] bg-white font-['Noto_Sans','Noto_Sans_CJK_SC',sans-serif] text-xs text-[#3c4143]">
      <TitleBar />
      <TabBar />
      <Ribbon />
      <div className="flex min-h-0 flex-1">
        <Sidebar />
        <Viewport />
      </div>
      <StatusBar />
      <Watermark />
    </div>
  );
}
